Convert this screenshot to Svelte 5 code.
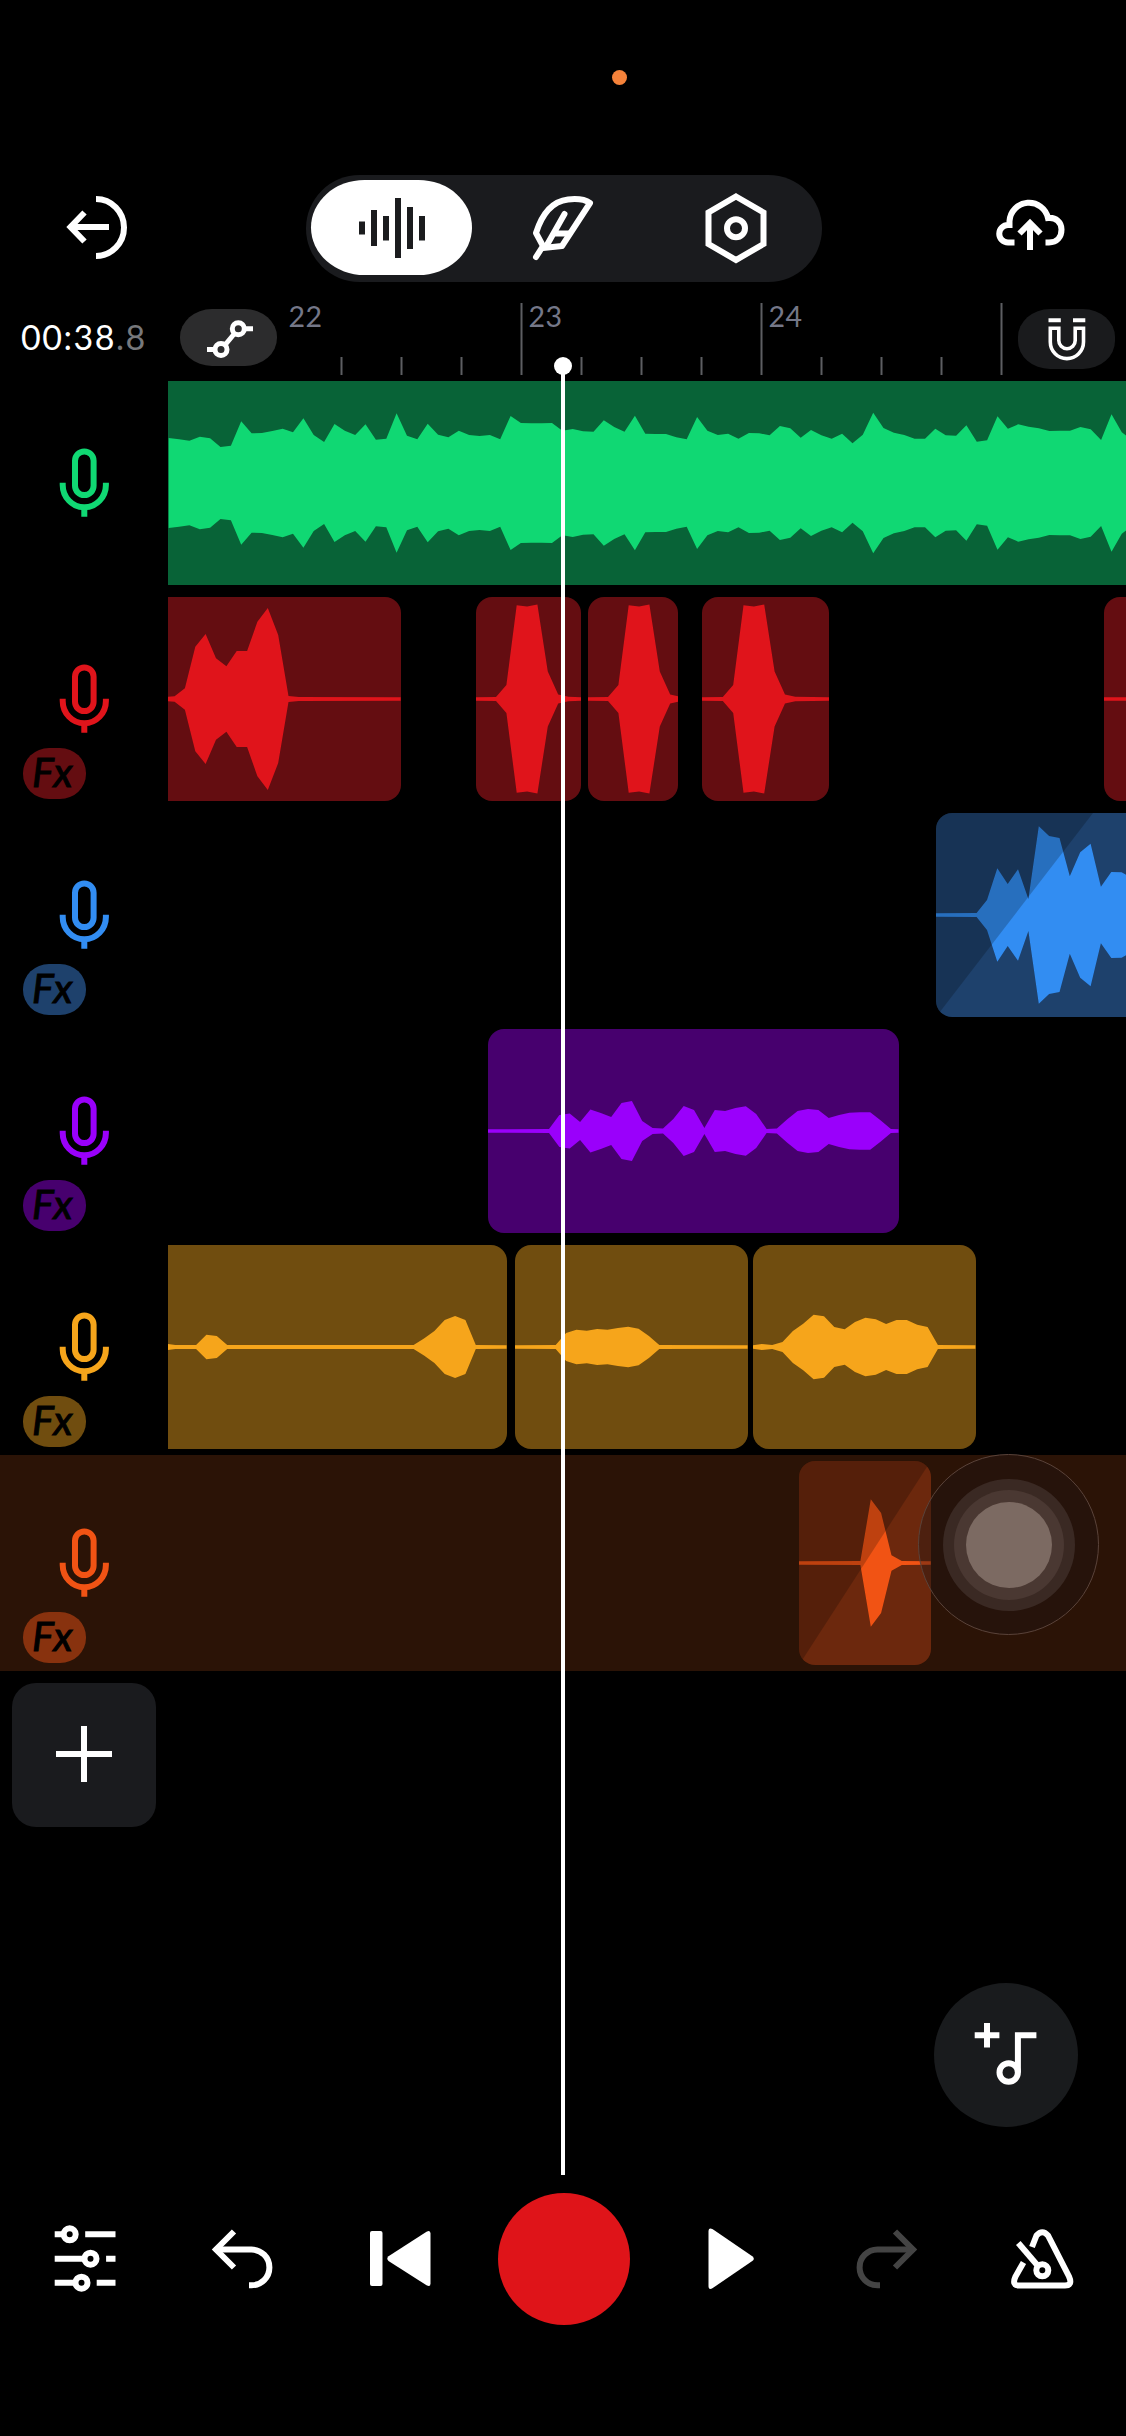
<script>
    // Width of one waveform sample at the current zoom level
    const STEP = 10.36;
    const CLIP_HEIGHT = 204;
    const MID = CLIP_HEIGHT / 2;
    const SILENCE = 1.8;

    const BAR_WIDTH = 240;
    const BEATS = 4;

    const bars = [
        { x: 4.5, label: "22" },
        { x: 244.5, label: "23" },
        { x: 484.5, label: "24" },
        { x: 724.5, label: "" },
    ];

    const shout = [2, 14, 93.7, 92.5, 94.5, 27.5, 4.5, 2.3];

    const tracks = [
        {
            name: "green",
            fx: false,
            clips: [
                {
                    x: 0,
                    width: 958,
                    edges: "flat",
                    start: 0.7,
                    amps: [
                        45, 43.7, 42.3, 46.3, 44.7, 36, 37.3, 61.7, 49.7, 50,
                        52, 54.3, 50.7, 64.7, 48, 41, 59, 52.3, 48, 58.7, 43.3,
                        44.3, 69.7, 47.3, 43.7, 59.3, 48.3, 45.7, 52.3, 48, 47,
                        48, 43.7, 67, 60, 59.7, 59.7, 60, 52.3, 54, 51.7, 51.3,
                        62.7, 56, 51.3, 67.3, 49.3, 49, 49, 45.7, 43.7, 66,
                        52.3, 48, 49.3, 44.3, 50, 49.7, 47.7, 57, 54.7, 45.3,
                        53, 47.7, 44.3, 49.3, 39.7, 48.3, 70.3, 55, 50.3, 48,
                        44.3, 44.3, 54.3, 47.7, 47.3, 57.7, 41.3, 42.7, 66.7,
                        54.3, 58.7, 56.3, 54.7, 52, 52.3, 52.3, 56, 53.7, 43,
                        68.7, 50.7, 43,
                    ],
                },
            ],
        },
        {
            name: "red",
            fx: true,
            clips: [
                {
                    x: 0,
                    width: 232.7,
                    edges: "open-left",
                    start: -3.8,
                    amps: [
                        2, 2.7, 10.7, 52.3, 65, 40.7, 32.7, 48, 48, 77.3, 91,
                        64, 3, 2,
                    ],
                },
                { x: 308, width: 105.2, start: 20, amps: shout },
                { x: 420.2, width: 90.3, start: 20, amps: shout },
                { x: 533.7, width: 127.4, start: 20.8, amps: shout },
                { x: 936.3, width: 120, start: 30, amps: [] },
            ],
        },
        {
            name: "blue",
            fx: true,
            clips: [
                {
                    x: 768,
                    width: 240,
                    start: 40.6,
                    fade: 157,
                    amps: [
                        2, 15, 46.7, 31, 45.7, 16, 88.7, 79, 77, 38.7, 62.7,
                        71.3, 28.3, 43, 42.7, 37, 30,
                    ],
                },
            ],
        },
        {
            name: "purple",
            fx: true,
            clips: [
                {
                    x: 320.3,
                    width: 410.5,
                    start: 61,
                    amps: [
                        2, 16, 17.5, 9, 21.5, 18, 14, 28, 30, 10, 3, 2.5, 12,
                        25, 21, 3, 21, 20, 23, 24.7, 17, 2, 2.5, 11.7, 20, 22,
                        21, 13, 16, 18.3, 18.7, 18.7, 10.7, 2,
                    ],
                },
            ],
        },
        {
            name: "yellow",
            fx: true,
            clips: [
                {
                    x: 0,
                    width: 338.6,
                    edges: "open-left",
                    start: -3,
                    amps: [
                        3.5, 2, 2, 2, 12.3, 11, 2, 2, 2, 2, 2, 2, 2, 2, 2, 2,
                        2, 2, 2, 2, 2, 2, 2, 2, 2, 8.5, 16, 27, 31, 27, 2,
                    ],
                },
                {
                    x: 347.3,
                    width: 232.6,
                    start: 40.7,
                    amps: [2, 14, 17.3, 16.3, 18, 17.3, 19, 20.3, 18.3, 11, 2],
                },
                {
                    x: 585.3,
                    width: 222.4,
                    start: 8.8,
                    amps: [
                        3, 2, 5, 16, 23.3, 32.3, 30.7, 20, 17.7, 25, 29.3,
                        27.7, 23, 27, 27, 22.3, 20, 2,
                    ],
                },
            ],
        },
        {
            name: "orange",
            fx: true,
            selected: true,
            clips: [
                {
                    x: 631.2,
                    width: 131.8,
                    start: 61.4,
                    fade: 131.8,
                    amps: [2, 63.7, 50, 7.7, 2],
                },
            ],
        },
    ];

    // Mirrored outline: top edge left to right, bottom edge back again
    function wavePath({ width, start, amps }) {
        const points = amps.map((amp, i) => [
            start + i * STEP,
            Math.max(amp, SILENCE),
        ]);
        if (start > 1) points.unshift([0, SILENCE]);
        const last = points[points.length - 1][0];
        if (last < width) points.push([width, SILENCE]);

        const top = points.map(([x, a]) => `${x.toFixed(1)} ${(MID - a).toFixed(1)}`);
        const bottom = points
            .map(([x, a]) => `${x.toFixed(1)} ${(MID + a).toFixed(1)}`)
            .reverse();
        return `M${top.join("L")}L${bottom.join("L")}Z`;
    }
</script>

<div class="studio">
    <div class="status-bar"><span class="mic-dot"></span></div>

    <header class="toolbar">
        <button class="plain back" aria-label="Back">
            <svg width="72" height="72" viewBox="0 0 72 72" class="stroke">
                <path d="M35 8a28 28.5 0 0 1 0 57" />
                <path d="M48 36H9M23.500 21.500L9.500 36l14 14.500" />
            </svg>
        </button>

        <nav class="modes">
            <button class="mode active" aria-label="Tracks">
                <svg width="72" height="72" viewBox="0 0 72 72" fill="#1b1c1e">
                    <rect x="4" y="29.500" width="6" height="13" />
                    <rect x="16" y="18" width="6" height="36" />
                    <rect x="28" y="24" width="6" height="24.500" />
                    <rect x="40" y="6" width="6" height="60" />
                    <rect x="52" y="15" width="6" height="42" />
                    <rect x="64" y="24" width="6" height="24.500" />
                </svg>
            </button>
            <button class="mode" aria-label="Lyrics">
                <svg width="90" height="90" viewBox="0 0 90 90" class="stroke feather">
                    <path d="M17 74L24 63L17 50C24 28 36 18 49 16.500C58 15.500 66 16.500 71 20L43 63L24 65" />
                    <path d="M45.500 31L28.500 61M36 50.500H50" />
                </svg>
            </button>
            <button class="mode" aria-label="Settings">
                <svg width="72" height="80" viewBox="0 0 72 80" class="stroke">
                    <path d="M36 8.500L63.500 24.500V56L36 72L8.500 56V24.500Z" />
                    <circle cx="36" cy="40.200" r="9" />
                </svg>
            </button>
        </nav>

        <button class="plain upload" aria-label="Upload">
            <svg width="76" height="72" viewBox="0 0 76 72" class="stroke">
                <path d="M22.500 51.500H16a8.700 8.700 0 0 1 0-17.500H17.500V30A19.500 19.500 0 0 1 56 27C64 26 69.500 31.500 69.500 38.500C69.500 46 65 51.500 57 51.500H53.500" />
                <path d="M38 59V32M27.500 42.500L38 32l10.500 10.500" />
            </svg>
        </button>
    </header>

    <div class="ruler">
        <div class="time">00:38<span>.8</span></div>
        <button class="pill automation" aria-label="Automation">
            <svg width="60" height="48" viewBox="0 0 60 48" class="stroke thin">
                <circle cx="39.300" cy="14.700" r="6" />
                <circle cx="22" cy="35.500" r="6" />
                <path d="M45 14.700h9M16 35.500H8M35.500 19.500L26 31" />
            </svg>
        </button>
        <svg class="ticks" width="741" height="93" viewBox="0 0 741 93">
            {#each bars as bar}
                {#if bar.x > 10}
                    <rect x={bar.x - 1} y="21" width="2" height="72" />
                {/if}
                {#each Array(BEATS - 1) as _, i}
                    {@const x = bar.x + ((i + 1) * BAR_WIDTH) / BEATS}
                    {#if x < bars[3].x}
                        <rect x={x - 1} y="75" width="2" height="18" />
                    {/if}
                {/each}
                <text x={bar.x + 7} y="44.700">{bar.label}</text>
            {/each}
        </svg>
        <button class="pill snap" aria-label="Snap to grid">
            <svg width="44" height="50" viewBox="0 0 44 50">
                <path fill="#fff" d="M3.500 4.200h12.300v4H3.500zM28 4.200h12.300v4H28z" />
                <path
                    class="magnet"
                    d="M5.300 14.200H13.800V26.500a8.200 8.200 0 0 0 16.400 0V14.200H38.500V28a16.600 16.600 0 0 1-33.200 0Z"
                />
            </svg>
        </button>
    </div>

    <main class="tracks">
        {#each tracks as track}
            <section class="track {track.name}" class:selected={track.selected}>
                <div class="track-head">
                    <svg class="mic" width="60" height="76" viewBox="0 0 60 76">
                        <rect x="21" y="6.500" width="18.600" height="43.500" rx="9.300" />
                        <path d="M8.700 37.700V40a21.600 22.300 0 0 0 43.200 0V37.700M30.300 62V71.700" />
                    </svg>
                    {#if track.fx}
                        <span class="fx">Fx</span>
                    {/if}
                </div>
                <div class="lane">
                    {#each track.clips as clip}
                        <div
                            class="clip {clip.edges ?? ''}"
                            style="left:{clip.x}px; width:{clip.width}px;"
                        >
                            <svg width={clip.width} height={CLIP_HEIGHT}>
                                <path class="wave" d={wavePath(clip)} />
                                {#if clip.fade}
                                    <path class="fade" d="M0 0H{clip.fade}L0 {CLIP_HEIGHT}Z" />
                                {/if}
                            </svg>
                        </div>
                    {/each}
                </div>
            </section>
        {/each}

        <button class="add-track" aria-label="Add track">
            <svg width="60" height="60" viewBox="0 0 60 60" class="stroke">
                <path d="M2 29H58M30 1V57" />
            </svg>
        </button>

        <div class="touch"><span></span></div>
    </main>

    <div class="playhead"></div>

    <button class="add-sound" aria-label="Add sound">
        <svg width="72" height="72" viewBox="0 0 72 72" class="stroke">
            <path d="M4.700 16.300H29.400M17 4V28.500" />
            <path d="M66.400 16.300H47.900V53.500" />
            <circle cx="38.700" cy="53.500" r="9.200" />
        </svg>
    </button>

    <footer class="transport">
        <button class="plain" aria-label="Mixer">
            <svg width="72" height="72" viewBox="0 0 72 72" class="stroke">
                <circle cx="20.700" cy="11.300" r="6" />
                <circle cx="41.500" cy="35.700" r="6" />
                <circle cx="32.500" cy="59.700" r="6" />
                <path d="M5.700 11.300h9M36.200 11.300h30.300M5.700 35.700h30M57.100 35.700h9.400M5.700 59.700h21M47.700 59.700h18.800" />
            </svg>
        </button>
        <button class="plain" aria-label="Undo">
            <svg width="72" height="72" viewBox="0 0 72 72" class="stroke">
                <path d="M8 26.500H44.500a17.900 17.900 0 0 1 0 35.800H42" />
                <path d="M27 8.500L9 26.500l18 18" />
            </svg>
        </button>
        <button class="plain" aria-label="Rewind">
            <svg width="72" height="72" viewBox="0 0 72 72" fill="#fff">
                <rect x="5" y="8" width="12.500" height="55" rx="2" />
                <path d="M61.500 8.700Q65.500 6.500 65.500 10.500V60.500Q65.500 64.500 61.500 62.300L23.500 38Q21 35.600 23.500 33.300Z" />
            </svg>
        </button>
        <button class="record" aria-label="Record"></button>
        <button class="plain" aria-label="Play">
            <svg width="72" height="72" viewBox="0 0 72 72" fill="#fff">
                <path d="M14.500 8.500Q14.500 4 18.800 6.300L58.300 33.300Q61.300 35.700 58.300 38L18.800 65Q14.500 67.500 14.500 63Z" />
            </svg>
        </button>
        <button class="plain" aria-label="Redo" disabled>
            <svg width="72" height="72" viewBox="0 0 72 72" class="stroke muted">
                <path d="M64 26.500H27.500a17.900 17.900 0 0 0 0 35.800H30" />
                <path d="M45 8.500L63 26.500l-18 18" />
            </svg>
        </button>
        <button class="plain" aria-label="Metronome">
            <svg width="72" height="72" viewBox="0 0 72 72" class="stroke">
                <path d="M17.500 39.500L9.500 53.500Q5.500 62.500 13 62.500H59Q67 62.500 63 53.500L42 12.500Q36.300 6 30.500 12.500L26 24" />
                <circle cx="36.300" cy="47.300" r="6" />
                <path d="M32 43L12.300 20" />
            </svg>
        </button>
    </footer>
</div>

<style>
    :global(body) {
        background: #000;
    }

    .studio {
        position: relative;
        display: flex;
        flex-direction: column;
        width: 1126px;
        height: 2436px;
        overflow: hidden;
        background: #000;
        color: #fff;
        font-family: Lato, "Open Sans", sans-serif;
    }

    button {
        display: flex;
        align-items: center;
        justify-content: center;
        padding: 0;
        border: none;
        background: none;
    }

    svg {
        display: block;
        flex: none;
    }

    .stroke {
        fill: none;
        stroke: #fff;
        stroke-width: 6;
    }

    .stroke.thin {
        stroke-width: 5;
    }

    .stroke.muted {
        stroke: #444;
    }

    .feather {
        stroke-linejoin: round;
        stroke-linecap: round;
    }

    .status-bar {
        box-sizing: border-box;
        height: 175px;
        padding: 70px 0 0 612px;
    }

    .mic-dot {
        display: block;
        width: 15px;
        height: 15px;
        border-radius: 50%;
        background: #f5823a;
    }

    .toolbar {
        display: grid;
        grid-template-columns: 306px 516px 1fr;
        align-items: center;
        height: 107px;
    }

    .back {
        justify-self: start;
        margin: -3px 0 0 61px;
    }

    .upload {
        justify-self: end;
        margin: -3px 58px 0 0;
    }

    .modes {
        display: grid;
        grid-template-columns: 160.500px 184px 161px;
        box-sizing: border-box;
        height: 107px;
        padding: 5px;
        border-radius: 54px;
        background: #1a1b1e;
    }

    .mode {
        height: 95px;
        border-radius: 54px / 48px;
    }

    .mode.active {
        background: #fff;
    }

    .ruler {
        display: flex;
        height: 93px;
    }

    .time {
        box-sizing: border-box;
        width: 180px;
        padding: 35px 0 0 21px;
        font-size: 34px;
        line-height: 40px;
        letter-spacing: 1.500px;
        white-space: nowrap;
    }

    .time span {
        color: #77787b;
    }

    .pill {
        width: 97px;
        height: 57px;
        margin-top: 27px;
        border-radius: 32px / 28px;
    }

    .automation {
        background: #2c2c2d;
    }

    .snap {
        height: 60px;
        background: #1a1b1d;
    }

    .magnet {
        fill: none;
        stroke: #fff;
        stroke-width: 3.600;
    }

    .ticks rect {
        fill: #5d5e62;
    }

    .ticks text {
        fill: #747788;
        font-size: 28.500px;
        letter-spacing: 0.500px;
    }

    .tracks {
        position: relative;
    }

    .track {
        display: flex;
        height: 216px;
    }

    .green {
        --wave: #10d873;
        --clip: #086337;
    }

    .red {
        --wave: #e0141b;
        --clip: #640d11;
    }

    .blue {
        --wave: #328df2;
        --clip: #1e416c;
    }

    .purple {
        --wave: #9a00fb;
        --clip: #47006e;
    }

    .yellow {
        --wave: #f6a51b;
        --clip: #704d0f;
    }

    .orange {
        --wave: #f15314;
        --clip: #6c280d;
    }

    .track.selected {
        background: #2b1306;
    }

    .track-head {
        box-sizing: border-box;
        width: 168px;
        padding-top: 70px;
    }

    .mic {
        margin-left: 54px;
        fill: none;
        stroke: var(--wave);
        stroke-width: 6;
    }

    .fx {
        display: block;
        box-sizing: border-box;
        width: 63px;
        height: 51px;
        margin: 11px 0 0 23px;
        padding-left: 9px;
        border-radius: 26px / 25px;
        background: var(--clip);
        color: #000;
        font-size: 41px;
        font-style: italic;
        letter-spacing: 1.500px;
        line-height: 47px;
        -webkit-text-stroke: 1px #000;
    }

    .selected .fx {
        background: #88320e;
    }

    .lane {
        position: relative;
        flex: 1;
        overflow: hidden;
    }

    .clip {
        position: absolute;
        top: 6px;
        height: 204px;
        overflow: hidden;
        border-radius: 16px;
        background: var(--clip);
    }

    .clip.flat {
        border-radius: 0;
    }

    .clip.open-left {
        border-radius: 0 16px 16px 0;
    }

    .wave {
        fill: var(--wave);
    }

    .fade {
        fill: rgba(0, 0, 0, 0.210);
    }

    .add-track {
        width: 144px;
        height: 144px;
        margin: 12px 0 0 12px;
        border-radius: 24px;
        background: #1a1b1e;
    }

    .touch {
        position: absolute;
        left: 918px;
        top: 1079px;
        display: flex;
        align-items: center;
        justify-content: center;
        box-sizing: border-box;
        width: 181px;
        height: 181px;
        border: 1px solid #5a433a;
        border-radius: 50%;
        background: rgba(32, 20, 20, 0.400);
    }

    .touch span {
        width: 86px;
        height: 86px;
        border-radius: 50%;
        background: #7c6a62;
        box-shadow: 0 0 0 12px #4a3832, 0 0 0 23px #3a2923;
    }

    .playhead {
        position: absolute;
        left: 561px;
        top: 366px;
        width: 4px;
        height: 1809px;
        background: #fff;
    }

    .playhead::before {
        content: "";
        position: absolute;
        left: -7px;
        top: -9px;
        width: 18px;
        height: 18px;
        border-radius: 50%;
        background: #fff;
    }

    .add-sound {
        flex: none;
        align-self: flex-end;
        width: 144px;
        height: 144px;
        margin: 156px 48px 0 0;
        border-radius: 50%;
        background: #191b1d;
    }

    .transport {
        display: grid;
        grid-template-columns: repeat(3, 158px) 172px repeat(3, 156px);
        align-items: center;
        height: 132px;
        margin: 66px 0 0 5.500px;
    }

    .record {
        width: 132px;
        height: 132px;
        margin-left: 18px;
        border-radius: 50%;
        background: #df1419;
    }
</style>
